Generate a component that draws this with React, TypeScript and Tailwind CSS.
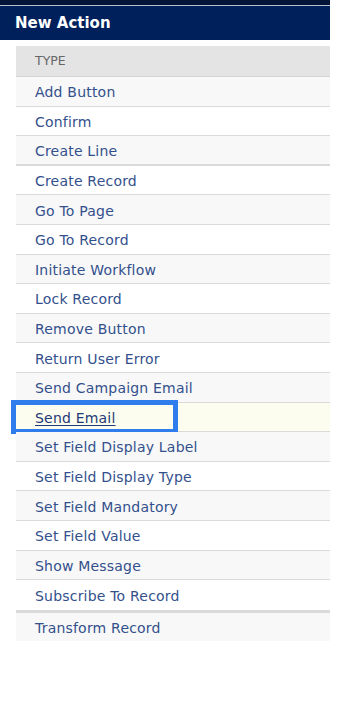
import React from "react";

type Row = { label: string; bg: string; border: string; h: string; active?: boolean };

const rows: Row[] = [
  { label: "Add Button", bg: "bg-[#f8f8f8]", border: "border-b", h: "h-[29.6px]" },
  { label: "Confirm", bg: "bg-white", border: "border-b", h: "h-[29.6px]" },
  { label: "Create Line", bg: "bg-[#f8f8f8]", border: "border-b-2", h: "h-[29.6px]" },
  { label: "Create Record", bg: "bg-white", border: "border-b", h: "h-[29.6px]" },
  { label: "Go To Page", bg: "bg-[#f8f8f8]", border: "border-b", h: "h-[29.6px]" },
  { label: "Go To Record", bg: "bg-white", border: "border-b", h: "h-[29.6px]" },
  { label: "Initiate Workflow", bg: "bg-[#f8f8f8]", border: "border-b", h: "h-[29.6px]" },
  { label: "Lock Record", bg: "bg-white", border: "border-b", h: "h-[29.6px]" },
  { label: "Remove Button", bg: "bg-[#f8f8f8]", border: "border-b", h: "h-[29.6px]" },
  { label: "Return User Error", bg: "bg-white", border: "border-b", h: "h-[29.6px]" },
  { label: "Send Campaign Email", bg: "bg-[#f8f8f8]", border: "border-b", h: "h-[29.6px]" },
  { label: "Send Email", bg: "bg-[#fdfdef]", border: "border-b", h: "h-[29.6px]", active: true },
  { label: "Set Field Display Label", bg: "bg-[#f8f8f8]", border: "border-b", h: "h-[29.6px]" },
  { label: "Set Field Display Type", bg: "bg-white", border: "border-b", h: "h-[29.6px]" },
  { label: "Set Field Mandatory", bg: "bg-[#f8f8f8]", border: "border-b", h: "h-[29.6px]" },
  { label: "Set Field Value", bg: "bg-white", border: "border-b", h: "h-[29.6px]" },
  { label: "Show Message", bg: "bg-[#f8f8f8]", border: "border-b", h: "h-[29.6px]" },
  { label: "Subscribe To Record", bg: "bg-white", border: "border-b-[3px]", h: "h-[32.6px]" },
  { label: "Transform Record", bg: "bg-[#f8f8f8]", border: "", h: "h-[28px]" },
];

export default function App() {
  return (
    <div className="w-[337px] h-[703px] bg-white" style={{ fontFamily: '"DejaVu Sans", Verdana, sans-serif' }}>
      <div className="w-[330px]">
        <div className="h-[5px] bg-[#021438]" />
        <div className="h-px bg-[#b8c0d0]" />
        <div className="h-[34px] bg-[#00205b] flex items-center pl-[15px]">
          <span className="text-white font-bold text-[15px] leading-none">New Action</span>
        </div>
      </div>
      <div className="ml-4 w-[314px] mt-[6px]">
        <div className="h-[31px] bg-[#e4e4e4] border-b border-[#d4d4d4] flex items-center pl-[19px] pt-px">
          <span className="text-[12.5px] text-[#666] leading-none">TYPE</span>
        </div>
        {rows.map((r) => (
          <div
            key={r.label}
            className={`relative ${r.h} ${r.bg} ${r.border} border-[#dadada] flex items-center pl-[19px] pt-[2px]`}
          >
            {r.active && (
              <div className="absolute left-[-5px] top-[-3px] w-[167px] h-[34px] border-[5px] border-[#2f7ded]" />
            )}
            <span
              className={`text-[14px] leading-none tracking-[0.2px] ${
                r.active ? "text-[#1f3a78] underline underline-offset-2" : "text-[#33508c]"
              }`}
            >
              {r.label}
            </span>
          </div>
        ))}
      </div>
    </div>
  );
}
